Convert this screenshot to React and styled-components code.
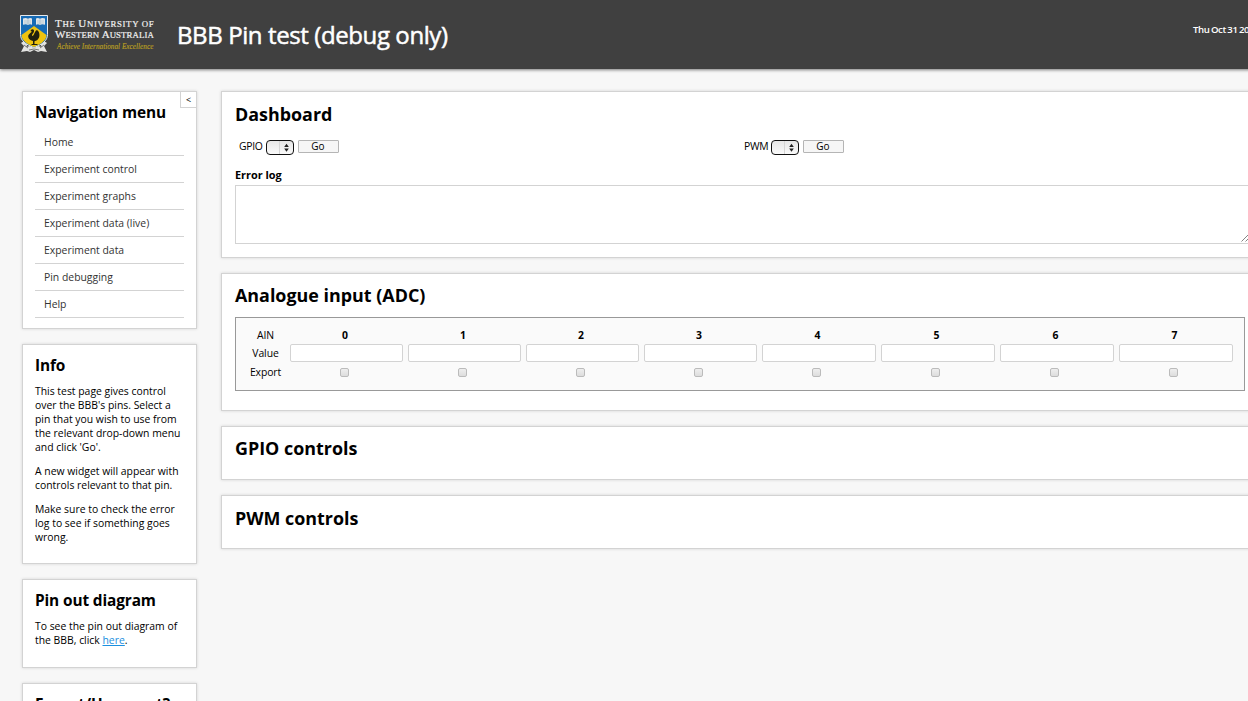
import React from "react";
import styled, { createGlobalStyle } from "styled-components";

const GlobalStyle = createGlobalStyle`
  * { box-sizing: border-box; }
  html, body { margin: 0; height: 100%; overflow: hidden; }
  body {
    background: #f7f7f7;
    color: #000;
    font-family: "Open Sans", "Liberation Sans", sans-serif;
    font-size: 10.4px;
    line-height: 14px;
  }
`;

const Page = styled.div`
  width: 1290px;
  height: 701px;
  overflow: hidden;
`;

const Header = styled.header`
  display: flex;
  height: 69px;
  padding-left: 20px;
  background: #404040;
  color: #fff;
  box-shadow: 0 1px 3px rgba(0, 0, 0, 0.5);
`;

const Brand = styled.div`
  display: flex;
  width: 157px;
  padding-top: 15px;
`;

const Crest = styled.svg`
  display: block;
  width: 28px;
  height: 38px;
  flex: none;
`;

const BrandText = styled.div`
  display: flex;
  flex-direction: column;
  padding: 3px 0 0 7px;
  white-space: nowrap;
  font-family: "Liberation Serif", serif;
`;

const BrandLine = styled.span`
  height: 11px;
  line-height: 11px;
  font-size: 8.8px;
  letter-spacing: ${(p) => p.$spacing};
  color: #f2f2f2;
  text-transform: uppercase;
  -webkit-text-stroke: 0.2px #f2f2f2;
`;

const Cap = styled.span`
  font-size: 11px;
`;

const Motto = styled.span`
  padding: 2px 0 0 2px;
  line-height: 10px;
  font-size: 7.2px;
  font-style: italic;
  letter-spacing: 0.03px;
  color: #b89e22;
  -webkit-text-stroke: 0.15px #b89e22;
`;

const PageTitle = styled.h1`
  flex: 1;
  margin: 0;
  padding-top: 18px;
  font-size: 24px;
  line-height: 33px;
  font-weight: 400;
  letter-spacing: -0.4px;
  -webkit-text-stroke: 0.5px #fff;
`;

const Clock = styled.div`
  width: 97px;
  padding-top: 23px;
  font-size: 9.6px;
  font-weight: 600;
  letter-spacing: -0.35px;
  word-spacing: -0.8px;
  white-space: nowrap;
`;

const Body = styled.div`
  display: grid;
  grid-template-columns: 175px 1046px;
  column-gap: 24px;
  padding: 22px 0 0 22px;
`;

const Column = styled.div`
  display: flex;
  flex-direction: column;
  gap: 15px;
`;

const Panel = styled.section`
  position: relative;
  flex: none;
  height: ${(p) => p.$height}px;
  padding: ${(p) => p.$top ?? 8}px ${(p) => (p.$wide ? 13 : 12)}px 0;
  border: 1px solid #d3d3d3;
  background: #fff;
  box-shadow: 0 0 3px rgba(0, 0, 0, 0.14);
`;

const Heading = styled.h2`
  margin: 0;
  font-size: ${(p) => (p.$large ? 17.9 : 15.4)}px;
  line-height: ${(p) => (p.$large ? 27 : 25)}px;
  font-weight: 700;
  letter-spacing: ${(p) => (p.$large ? 0 : -0.12)}px;
  white-space: nowrap;
`;

const Collapse = styled.button`
  position: absolute;
  top: -1px;
  right: -1px;
  width: 17px;
  height: 17px;
  padding: 0;
  border: 1px solid #d3d3d3;
  background: #fff;
  font: 9px/14px "Open Sans", sans-serif;
  color: #000;
`;

const Menu = styled.ul`
  margin: 4px 0 0;
  padding: 0;
  list-style: none;
`;

const MenuItem = styled.li`
  height: 27px;
  padding-left: 9px;
  border-bottom: 1px solid #d3d3d3;
  line-height: 27px;
  color: #333;
`;

const Paragraph = styled.p`
  margin: 0 0 10px;
  white-space: nowrap;
  &:first-of-type { margin-top: 6px; }
`;

const Link = styled.a`
  color: #1b8fe0;
  text-decoration: underline;
`;

const Controls = styled.div`
  display: grid;
  grid-template-columns: 505px 1fr;
  margin-top: 11px;
  padding-left: 4px;
`;

const Control = styled.div`
  display: flex;
  align-items: flex-start;
  height: 16px;
`;

const ControlLabel = styled.label`
  width: 27px;
  line-height: 15px;
  letter-spacing: -0.3px;
`;

const Picker = styled.button`
  display: flex;
  justify-content: flex-end;
  align-items: stretch;
  width: 28px;
  height: 15px;
  margin-top: 1px;
  padding: 0;
  border: 1px solid #111;
  border-radius: 4px;
  background: linear-gradient(#e6e6e6, #fafafa);
`;

const PickerArrows = styled.svg`
  width: 14px;
  height: 13px;
  border-left: 1px solid #d5d5d5;
`;

const GoButton = styled.button`
  width: 41px;
  height: 13px;
  margin: 1px 0 0 4px;
  padding: 0 1px 0 0;
  border: 1px solid #b5b5b5;
  border-radius: 1px;
  background: #f6f6f6;
  font: 10px/11px "Open Sans", sans-serif;
  color: #000;
`;

const LogLabel = styled.div`
  margin-top: 12px;
  font-size: 10.9px;
  line-height: 16px;
  font-weight: 700;
`;

const Log = styled.div`
  display: flex;
  justify-content: flex-end;
  align-items: flex-end;
  width: 1017px;
  height: 59px;
  margin-top: 2px;
  padding: 0 1px 1px 0;
  border: 1px solid #d3d3d3;
  background: #fff;
`;

const AdcTable = styled.div`
  display: grid;
  grid-template-columns: 49px repeat(4, 113px) repeat(4, 114px);
  grid-template-rows: 16px 18px 18px;
  column-gap: 5px;
  row-gap: 1px;
  width: 1010px;
  height: 74px;
  margin-top: 8px;
  padding-top: 9px;
  border: 1px solid #999;
  background: #fafafa;
  text-align: center;
  align-items: center;
`;

const RowLabel = styled.span`
  padding-left: 10px;
  line-height: 16px;
  letter-spacing: -0.1px;
`;

const ColumnLabel = styled.span`
  padding-right: 3px;
  font-weight: 700;
`;

const ValueField = styled.input`
  min-width: 0;
  width: 100%;
  height: 18px;
  border: 1px solid #d3d3d3;
  border-radius: 2px;
  background: #fff;
`;

const Check = styled.input`
  appearance: none;
  justify-self: center;
  width: 9px;
  height: 9px;
  margin: 1px 5px 0 0;
  border: 1px solid #bbb;
  border-radius: 2px;
  background: linear-gradient(#eee, #ddd);
`;

const CrestLogo = () => (
  <Crest viewBox="0 0 28 38">
    <path d="M4 26 1 28l3 3-3 6 6-1 3 1 4-2 4 2 3-1 6 1-3-6 3-3-3-2-4 3 2 3-4-1-4 2-4-2-4 1 2-3Z" fill="#e4e4e2" />
    <path d="m4 30 4 3m16-3-4 3M9 35l5-1 5 1" stroke="#777" fill="none" />
    <path d="M.5.5h27v19c0 6-5 10-13.500 13C5.500 29.500.5 25.500.5 19.500Z" fill="#176bb5" stroke="#e6e9ec" />
    <path d="M14 11 26.500 20c0 5-5 9-12.500 12C6.500 29 1.500 25 1.500 20Z" fill="#eec310" />
    <path d="M3 3.500q3-1 5 .3 2-1.300 4-.3v6.200q-2-1-4 .2-2-1.200-5-.2Zm13 0q2-1 4 .3 2-1.300 5-.3v6.200q-3-1-5 .2-2-1.200-4-.2Z" fill="#dfe5e9" />
    <path d="M8 4v6m12-6v6M4 6h7m6 0h7M4 8h7m6 0h7" stroke="#9eb5c8" strokeWidth=".6" />
    <path d="M10.500 16c.8-2.500 4-2 3.500.5-.3 1.800-2.500 2.500-2 4.500 2 0 2-3 4-5.500 1-.5 2 0 2.500 1 1.500 2.500 1.500 7-2 9l-2 .8v2.700h3v1h-6v-1h1.500v-3c-4-.8-5.500-4-4.500-6 .8-1.500 3-2.500 3.300-3.500Z" fill="#20200f" />
  </Crest>
);

const GoControl = ({ label }) => (
  <Control>
    <ControlLabel>{label}</ControlLabel>
    <Picker aria-label={label}>
      <PickerArrows viewBox="0 0 14 13">
        <path d="M4.500 6 7 2.500 9.500 6ZM4.500 7.500h5L7 11Z" fill="#222" />
      </PickerArrows>
    </Picker>
    <GoButton>Go</GoButton>
  </Control>
);

const menu = [
  "Home",
  "Experiment control",
  "Experiment graphs",
  "Experiment data (live)",
  "Experiment data",
  "Pin debugging",
  "Help",
];
const channels = [0, 1, 2, 3, 4, 5, 6, 7];

export default function App() {
  return (
    <Page>
      <GlobalStyle />
      <Header>
        <Brand>
          <CrestLogo />
          <BrandText>
            <BrandLine $spacing="0.65px"><Cap>T</Cap>he <Cap>U</Cap>niversity of</BrandLine>
            <BrandLine $spacing="0.1px"><Cap>W</Cap>estern <Cap>A</Cap>ustralia</BrandLine>
            <Motto>Achieve International Excellence</Motto>
          </BrandText>
        </Brand>
        <PageTitle>BBB Pin test (debug only)</PageTitle>
        <Clock>Thu Oct 31 2013</Clock>
      </Header>
      <Body>
        <Column>
          <Panel $height={238}>
            <Heading>Navigation menu</Heading>
            <Collapse>&lt;</Collapse>
            <Menu>{menu.map((m) => <MenuItem key={m}>{m}</MenuItem>)}</Menu>
          </Panel>
          <Panel $height={220}>
            <Heading>Info</Heading>
            <Paragraph>
              This test page gives control<br />over the BBB's pins. Select a<br />pin that you wish to use from<br />
              the relevant drop-down menu<br />and click 'Go'.
            </Paragraph>
            <Paragraph>A new widget will appear with<br />controls relevant to that pin.</Paragraph>
            <Paragraph>Make sure to check the error<br />log to see if something goes<br />wrong.</Paragraph>
          </Panel>
          <Panel $height={89}>
            <Heading>Pin out diagram</Heading>
            <Paragraph>To see the pin out diagram of<br />the BBB, click <Link>here</Link>.</Paragraph>
          </Panel>
          <Panel $height={89}>
            <Heading>Export/Unexport?</Heading>
          </Panel>
        </Column>
        <Column>
          <Panel $wide $top={9} $height={167}>
            <Heading $large>Dashboard</Heading>
            <Controls>
              <GoControl label="GPIO" />
              <GoControl label="PWM" />
            </Controls>
            <LogLabel>Error log</LogLabel>
            <Log>
              <svg width="9" height="9" viewBox="0 0 9 9">
                <path d="M.5 8.500l8-8M4.500 8.500l4-4" stroke="#777" strokeWidth=".9" />
              </svg>
            </Log>
          </Panel>
          <Panel $wide $height={138}>
            <Heading $large>Analogue input (ADC)</Heading>
            <AdcTable>
              <RowLabel>AIN</RowLabel>
              {channels.map((c) => <ColumnLabel key={c}>{c}</ColumnLabel>)}
              <RowLabel>Value</RowLabel>
              {channels.map((c) => <ValueField key={c} aria-label={`Value ${c}`} />)}
              <RowLabel>Export</RowLabel>
              {channels.map((c) => <Check key={c} type="checkbox" aria-label={`Export ${c}`} />)}
            </AdcTable>
          </Panel>
          <Panel $wide $height={54}>
            <Heading $large>GPIO controls</Heading>
          </Panel>
          <Panel $wide $top={9} $height={54}>
            <Heading $large>PWM controls</Heading>
          </Panel>
        </Column>
      </Body>
    </Page>
  );
}
